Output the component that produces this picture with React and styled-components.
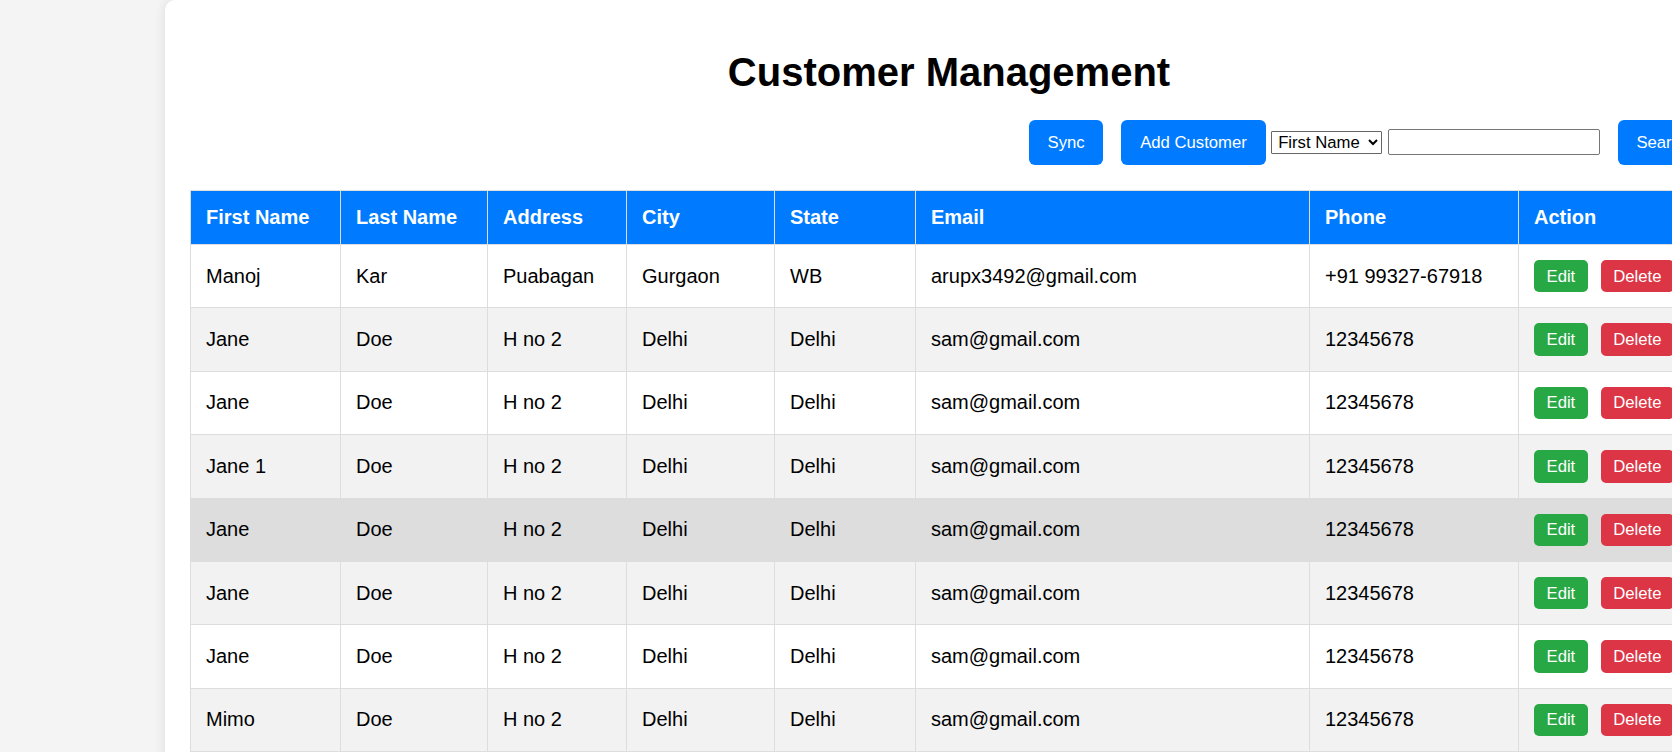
import React from 'react'
import styled, { createGlobalStyle } from 'styled-components'

const GlobalStyle = createGlobalStyle`
    html, body {
        margin: 0;
        padding: 0;
        overflow: hidden;
        background-color: #f4f4f4;
        font-family: "Liberation Sans", Arial, sans-serif;
    }
`

const Page = styled.div`
    width: 1672px;
    height: 752px;
    overflow: hidden;
    background-color: #f4f4f4;
`

const Card = styled.div`
    box-sizing: border-box;
    width: 1568px;
    margin-left: 165px;
    padding: 25px;
    background-color: #fff;
    border-radius: 10px;
    box-shadow: 0 0 12px rgba(0, 0, 0, 0.1);
`

const Title = styled.h1`
    margin: 24.4px 0 24.6px;
    text-align: center;
    font-size: 40px;
    line-height: 46px;
    font-weight: bold;
    color: #000;
`

const Toolbar = styled.div`
    display: flex;
    justify-content: flex-end;
    align-items: center;
    gap: 5.5px;
    height: 45px;
`

const ToolButton = styled.button`
    margin-left: 12.5px;
    padding: 12.9px 18.75px;
    border: none;
    border-radius: 6px;
    background-color: #007bff;
    color: #fff;
    font-family: "Liberation Sans", Arial, sans-serif;
    font-size: 16.7px;
    line-height: 19.2px;
    cursor: pointer;
    &:first-child {
        margin-left: 0;
    }
`

const FieldSelect = styled.select`
    box-sizing: border-box;
    width: 111px;
    height: 23px;
    padding: 0 2px;
    font-family: "Liberation Sans", Arial, sans-serif;
    font-size: 16.7px;
    color: #000;
    background-color: #fff;
    border: 1px solid #666;
    border-radius: 1px;
`

const SearchInput = styled.input`
    box-sizing: border-box;
    width: 212px;
    height: 26px;
    padding: 1px 3px;
    font-family: "Liberation Sans", Arial, sans-serif;
    font-size: 16.7px;
    border: 1px solid #767676;
    border-radius: 2px;
`

const Table = styled.table`
    width: 1518px;
    margin-top: 25px;
    border-collapse: collapse;
    table-layout: fixed;
    font-size: 20px;
    color: #000;
`

const HeadCell = styled.th`
    padding: 15px;
    text-align: left;
    font-weight: bold;
    line-height: 23px;
    color: #fff;
    background-color: #007bff;
    border: 1px solid #ddd;
`

const Row = styled.tr`
    background-color: ${p => (p.$active ? '#ddd' : p.$even ? '#f2f2f2' : '#fff')};
    &:hover {
        background-color: #ddd;
    }
`

const Cell = styled.td`
    padding: 15px;
    line-height: 23px;
    border: 1px solid #ddd;
    vertical-align: middle;
    white-space: nowrap;
    overflow: hidden;
`

const Actions = styled.div`
    display: flex;
    gap: 13px;
`

const ActionButton = styled.button`
    padding: 6.6px 12.5px;
    border: none;
    border-radius: 5px;
    background-color: ${p => (p.$danger ? '#dc3545' : '#28a745')};
    color: #fff;
    font-family: "Liberation Sans", Arial, sans-serif;
    font-size: 16.7px;
    line-height: 19.2px;
    cursor: pointer;
`

const columns = [
    { label: 'First Name', width: 150 },
    { label: 'Last Name', width: 147 },
    { label: 'Address', width: 139 },
    { label: 'City', width: 148 },
    { label: 'State', width: 141 },
    { label: 'Email', width: 394 },
    { label: 'Phone', width: 209 },
    { label: 'Action', width: 190 },
]

const janeDoe = { last: 'Doe', address: 'H no 2', city: 'Delhi', state: 'Delhi', email: 'sam@gmail.com', phone: '12345678' }

const customers = [
    { first: 'Manoj', last: 'Kar', address: 'Puabagan', city: 'Gurgaon', state: 'WB', email: 'arupx3492@gmail.com', phone: '+91 99327-67918' },
    { first: 'Jane', ...janeDoe },
    { first: 'Jane', ...janeDoe },
    { first: 'Jane 1', ...janeDoe },
    { first: 'Jane', ...janeDoe },
    { first: 'Jane', ...janeDoe },
    { first: 'Jane', ...janeDoe },
    { first: 'Mimo', ...janeDoe },
]

export default function App() {
    return (
        <Page>
            <GlobalStyle />
            <Card>
                <Title>Customer Management</Title>
                <Toolbar>
                    <ToolButton>Sync</ToolButton>
                    <ToolButton>Add Customer</ToolButton>
                    <FieldSelect defaultValue="first_name">
                        <option value="first_name">First Name</option>
                        <option value="city">City</option>
                        <option value="email">Email</option>
                        <option value="phone">Phone</option>
                    </FieldSelect>
                    <SearchInput type="text" />
                    <ToolButton>Search</ToolButton>
                </Toolbar>
                <Table>
                    <colgroup>
                        {columns.map(c => <col key={c.label} width={c.width} />)}
                    </colgroup>
                    <thead>
                        <tr>
                            {columns.map(c => <HeadCell key={c.label}>{c.label}</HeadCell>)}
                        </tr>
                    </thead>
                    <tbody>
                        {customers.map((c, i) => (
                            <Row key={i} $even={i % 2 === 1} $active={i === 4}>
                                <Cell>{c.first}</Cell>
                                <Cell>{c.last}</Cell>
                                <Cell>{c.address}</Cell>
                                <Cell>{c.city}</Cell>
                                <Cell>{c.state}</Cell>
                                <Cell>{c.email}</Cell>
                                <Cell>{c.phone}</Cell>
                                <Cell>
                                    <Actions>
                                        <ActionButton>Edit</ActionButton>
                                        <ActionButton $danger>Delete</ActionButton>
                                    </Actions>
                                </Cell>
                            </Row>
                        ))}
                    </tbody>
                </Table>
            </Card>
        </Page>
    )
}
